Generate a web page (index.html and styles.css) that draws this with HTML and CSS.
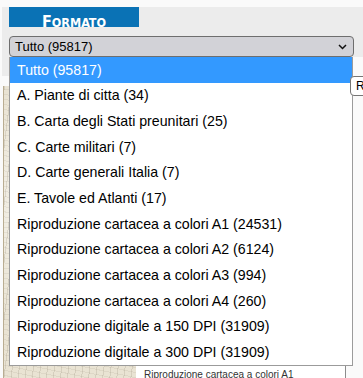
FILE: index.html
```html
<!DOCTYPE html>
<html lang="it">
<head>
<meta charset="utf-8">
<title>Formato</title>
<link rel="stylesheet" href="styles.css">
</head>
<body>
<div class="page">
  <section class="filter">
    <h2 class="title"><span class="title-cap">F</span><span class="title-rest">ormato</span></h2>
    <div class="select">
      <span class="select-value">Tutto (95817)</span>
      <svg class="chev" width="9" height="6" viewBox="0 0 9 6"><polyline points="1,1 4.5,4.5 8,1" fill="none" stroke="#111" stroke-width="1.5"/></svg>
    </div>
  </section>
  <section class="results">
    <article class="card">
      <div class="thumb"></div>
      <div class="info"><p class="caption">Riproduzione cartacea a colori A1</p></div>
    </article>
  </section>
  <ul class="dropdown">
    <li class="item item--active">Tutto (95817)</li>
    <li class="item">A. Piante di citta (34)</li>
    <li class="item">B. Carta degli Stati preunitari (25)</li>
    <li class="item">C. Carte militari (7)</li>
    <li class="item">D. Carte generali Italia (7)</li>
    <li class="item">E. Tavole ed Atlanti (17)</li>
    <li class="item">Riproduzione cartacea a colori A1 (24531)</li>
    <li class="item">Riproduzione cartacea a colori A2 (6124)</li>
    <li class="item">Riproduzione cartacea a colori A3 (994)</li>
    <li class="item">Riproduzione cartacea a colori A4 (260)</li>
    <li class="item">Riproduzione digitale a 150 DPI (31909)</li>
    <li class="item">Riproduzione digitale a 300 DPI (31909)</li>
  </ul>
  <div class="tooltip">Ri</div>
</div>
</body>
</html>
```

FILE: styles.css
```css
html, body {
  margin: 0;
  padding: 0;
  background: #fafafa;
  font-family: "Liberation Sans", Arial, sans-serif;
  overflow: hidden;
}

.page {
  position: relative;
  width: 363px;
  height: 378px;
  overflow: hidden;
}

.filter {
  margin: 7px 0 0 2px;
  padding: 0 9px 0 7px;
  background: #ececec;
}

.title {
  margin: 0;
  width: 130px;
  height: 20px;
  box-sizing: border-box;
  padding-top: 5px;
  background: #0a72b5;
  color: #fff;
  text-align: center;
  font-family: "Liberation Sans Narrow", "DejaVu Sans Condensed", "DejaVu Sans", sans-serif;
  font-stretch: condensed;
  font-weight: bold;
  line-height: 15px;
}

.title-cap {
  font-size: 16px;
}

.title-rest {
  font-size: 12.5px;
  text-transform: uppercase;
}

.select {
  margin-top: 9px;
  height: 21px;
  box-sizing: border-box;
  border: 1px solid #6e6e6e;
  border-radius: 4px;
  background: #d2d2d7;
  display: flex;
  align-items: center;
  justify-content: space-between;
  padding: 0 6px 0 5px;
  font-size: 13px;
  color: #000;
}

.chev {
  display: block;
  margin-top: 1px;
}

.results {
  padding-top: 29px;
  background: linear-gradient(#ececec, #ececec) 2px 0 / 7px 19px no-repeat, #fafafa;
}

.card {
  display: flex;
  margin-left: 3px;
  width: 343px;
}

.thumb {
  width: 132px;
  height: 300px;
  flex: none;
  border-left: 1px solid #b9ad92;
  background-color: #e9e3d3;
  background-image:
    repeating-linear-gradient(97deg, rgba(110, 100, 80, 0.16) 0 1px, transparent 1px 7px),
    repeating-linear-gradient(12deg, rgba(140, 130, 110, 0.12) 0 1px, transparent 1px 5px),
    radial-gradient(circle at 30% 40%, rgba(255, 255, 255, 0.5), transparent 60%);
}

.info {
  flex: 1;
  background: #fff;
  border-right: 1px solid #8c8c8c;
  padding: 283px 0 0 8px;
  height: 300px;
  box-sizing: border-box;
}

.caption {
  margin: 0;
  font-family: "Liberation Sans Narrow", "Liberation Sans", Arial, sans-serif;
  font-stretch: condensed;
  font-size: 10px;
  line-height: 12px;
  color: #333;
}

.dropdown {
  position: absolute;
  left: 9px;
  top: 57px;
  width: 344px;
  height: 309px;
  box-sizing: border-box;
  margin: 0;
  padding: 0;
  list-style: none;
  background: #fff;
  border: 1px solid #9b9b9b;
  border-top: none;
  display: grid;
  grid-template-rows: repeat(12, 1fr);
}

.item {
  display: flex;
  align-items: center;
  padding-left: 7px;
  font-size: 14.2px;
  color: #000;
  white-space: nowrap;
}

.item--active {
  background: #3399ff;
  color: #fff;
}

.tooltip {
  position: absolute;
  left: 350px;
  top: 76px;
  height: 20px;
  box-sizing: border-box;
  padding: 0 4px 0 5px;
  border: 1px solid #767676;
  border-radius: 4px;
  background: #fff;
  font-size: 12px;
  line-height: 18px;
  color: #000;
  white-space: nowrap;
}
```
